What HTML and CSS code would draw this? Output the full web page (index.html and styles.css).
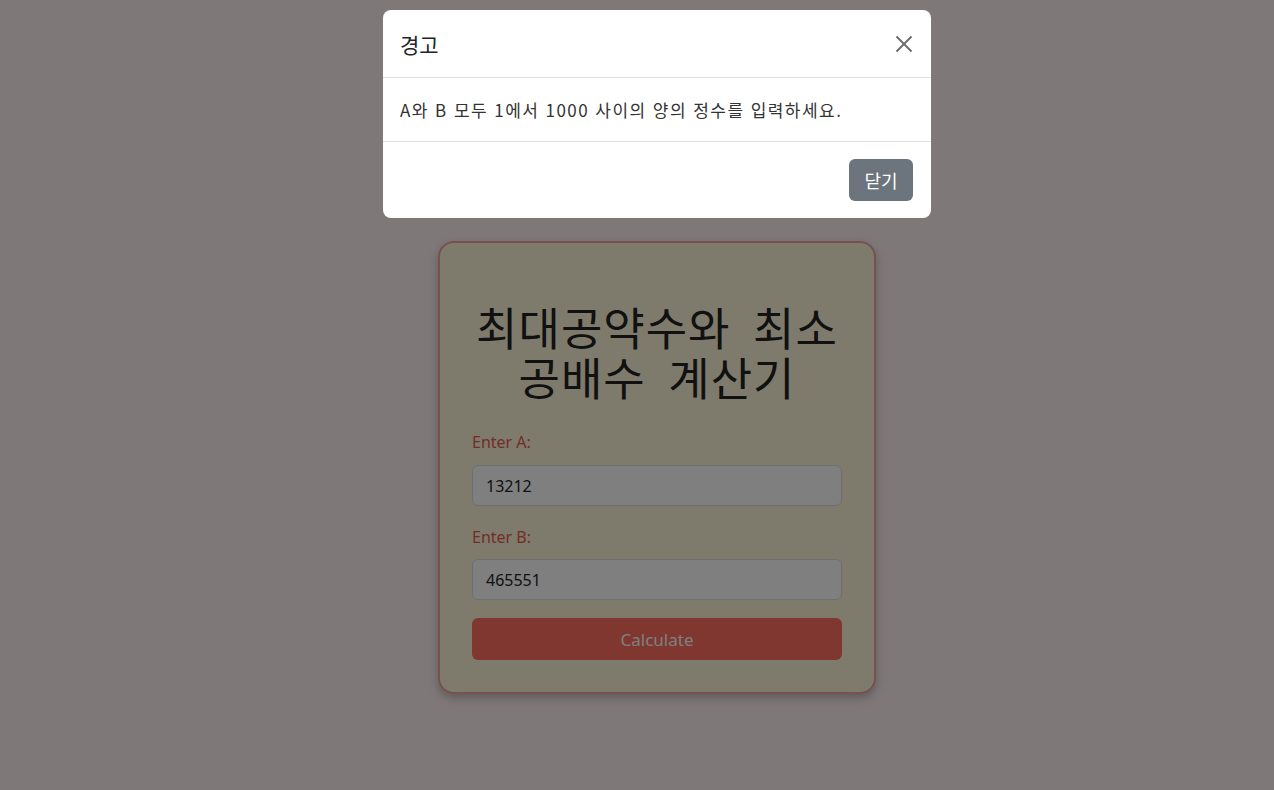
FILE: index.html
```html
<!DOCTYPE html>
<html lang="ko">
<head>
<meta charset="utf-8">
<title>최대공약수와 최소공배수 계산기</title>
<link rel="stylesheet" href="styles.css">
</head>
<body>
<main class="page">
  <div class="card">
    <h1 class="title">최대공약수와 최소 공배수 계산기</h1>
    <form class="form">
      <label class="label" for="a">Enter A:</label>
      <input class="input" id="a" type="text" value="13212">
      <label class="label label-b" for="b">Enter B:</label>
      <input class="input" id="b" type="text" value="465551">
      <button class="calc" type="button">Calculate</button>
    </form>
  </div>
</main>
<div class="backdrop"></div>
<div class="modal-wrap">
  <div class="modal">
    <div class="modal-header">
      <h5 class="modal-title">경고</h5>
      <button class="close" type="button" aria-label="Close">
        <svg width="20" height="20" viewBox="0 0 16 16"><path d="M2 2 L14 14 M14 2 L2 14" stroke="#6c6c6c" stroke-width="1.5" fill="none"/></svg>
      </button>
    </div>
    <div class="modal-body">A와 B 모두 1에서 1000 사이의 양의 정수를 입력하세요.</div>
    <div class="modal-footer">
      <button class="btn-close-modal" type="button">닫기</button>
    </div>
  </div>
</div>
</body>
</html>
```
FILE: styles.css
```css
* { box-sizing: border-box; }
html, body { margin: 0; height: 100%; }
body {
  background: #fff0f0;
  font-family: "Noto Sans", "Noto Sans CJK KR", sans-serif;
  color: #212529;
}
.page {
  display: flex;
  justify-content: center;
  padding: 241px 0 0 40px;
}
.card {
  width: 438px;
  background: #fcf6da;
  border: 2px solid #f2a0a0;
  border-radius: 16px;
  padding: 32px;
  box-shadow: 0 4px 10px rgba(0,0,0,0.25);
}
.title {
  margin: 27px -10px 28px;
  font-family: "Noto Sans CJK KR", sans-serif;
  font-weight: 400;
  font-size: 45px;
  line-height: 50px;
  letter-spacing: 1px;
  word-spacing: 9px;
  text-align: center;
  color: #222;
}
.form { display: flex; flex-direction: column; }
.label {
  font-size: 16px;
  line-height: 24px;
  color: #e65a4e;
  margin-bottom: 11px;
}
.label-b { margin-top: 19px; margin-bottom: 10px; }
.input {
  height: 41px;
  border: 1px solid #dedede;
  border-radius: 6px;
  background: #fff;
  padding: 0 13px;
  font-family: "Noto Sans", sans-serif;
  font-size: 16px;
  color: #212529;
}
.calc {
  margin-top: 18px;
  height: 42px;
  border: none;
  border-radius: 6px;
  background: #ff6e60;
  color: #fff;
  font-family: "Noto Sans", sans-serif;
  font-size: 17px;
}
.backdrop {
  position: fixed;
  inset: 0;
  background: rgba(0,0,0,0.5);
}
.modal-wrap {
  position: fixed;
  inset: 0;
  display: flex;
  justify-content: center;
  align-items: flex-start;
  padding: 10px 0 0 40px;
}
.modal {
  width: 548px;
  background: #fff;
  border-radius: 8px;
  font-family: "Noto Sans CJK KR", sans-serif;
}
.modal-header {
  height: 68px;
  display: flex;
  align-items: center;
  justify-content: space-between;
  padding: 0 15px 0 17px;
  border-bottom: 1px solid #dee2e6;
}
.modal-title {
  margin: 0;
  font-size: 21px;
  font-weight: 400;
  color: #212529;
}
.close {
  border: none;
  background: none;
  padding: 0;
  width: 24px;
  height: 24px;
  display: flex;
  align-items: center;
  justify-content: center;
}
.modal-body {
  height: 63px;
  display: flex;
  align-items: center;
  padding: 0 17px;
  font-size: 17px;
  letter-spacing: 1.45px;
  color: #333;
}
.modal-footer {
  height: 77px;
  border-top: 1px solid #dee2e6;
  display: flex;
  justify-content: flex-end;
  align-items: center;
  padding: 0 18px;
}
.btn-close-modal {
  width: 64px;
  height: 42px;
  border: none;
  border-radius: 6px;
  background: #6c757d;
  color: #fff;
  font-family: "Noto Sans CJK KR", sans-serif;
  font-size: 18px;
}
```
